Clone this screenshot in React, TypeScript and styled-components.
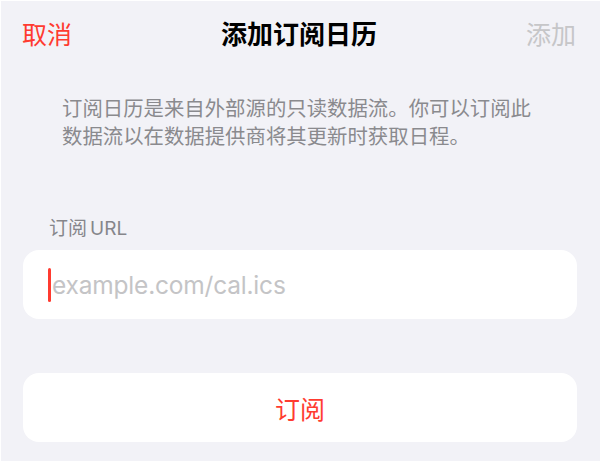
import { createGlobalStyle } from "styled-components";
import styled from "styled-components";

const GlobalStyle = createGlobalStyle`
  html, body {
    margin: 0;
    padding: 0;
    background: #f2f2f7;
  }
  * {
    box-sizing: border-box;
  }
`;

const CJK = `"Noto Sans CJK SC", "Noto Sans", sans-serif`;
const LATIN = `Inter, "Noto Sans CJK SC", sans-serif`;

const Page = styled.div`
  width: 600px;
  height: 462px;
  background: #f2f2f7;
  border-top: 1px solid #fff;
  border-left: 1px solid #fff;
  border-bottom: 1px solid #fff;
  display: flex;
  flex-direction: column;
  font-family: ${CJK};
  overflow: hidden;
  & > * {
    flex-shrink: 0;
  }
`;

const NavBar = styled.div`
  height: 63px;
  display: grid;
  grid-template-columns: 1fr auto 1fr;
  align-items: center;
  padding: 0 24px 0 21px;
`;

const NavButton = styled.span<{ $align: "left" | "right"; $disabled?: boolean }>`
  font-size: 25px;
  line-height: 30px;
  color: ${(p) => (p.$disabled ? "#c6c6c8" : "#ff3b30")};
  justify-self: ${(p) => (p.$align === "left" ? "start" : "end")};
`;

const NavTitle = styled.h1`
  margin: 0;
  font-size: 26px;
  line-height: 30px;
  font-weight: 700;
  color: #000;
`;

const Description = styled.p`
  margin: 29px 0 0;
  padding: 0 40px 0 61px;
  font-size: 20.4px;
  line-height: 28px;
  color: #8a8a8e;
`;

const Section = styled.div<{ $top: number }>`
  margin-top: ${(p) => p.$top}px;
  display: flex;
  flex-direction: column;
  gap: 9px;
  padding: 0 23px 0 22px;
`;

const FieldLabel = styled.div`
  padding-left: 26px;
  font-size: 19px;
  line-height: 24px;
  color: #86868b;
`;

const Latin = styled.span`
  font-family: ${LATIN};
  font-size: 19px;
  margin-left: 3px;
`;

const Card = styled.div`
  height: 69px;
  background: #fff;
  border-radius: 16px;
  display: flex;
  align-items: center;
`;

const InputCard = styled(Card)`
  padding-left: 25px;
`;

const Caret = styled.span`
  width: 3px;
  height: 34px;
  border-radius: 2px;
  background: #ff3b30;
  margin-right: 1px;
`;

const Placeholder = styled.span`
  font-family: ${LATIN};
  font-size: 24.5px;
  letter-spacing: -0.2px;
  color: #c4c4c6;
`;

const ActionCard = styled(Card)`
  justify-content: center;
  font-size: 25px;
  color: #ff3b30;
`;

export default function App() {
  return (
    <>
      <GlobalStyle />
      <Page>
        <NavBar>
          <NavButton $align="left">取消</NavButton>
          <NavTitle>添加订阅日历</NavTitle>
          <NavButton $align="right" $disabled>
            添加
          </NavButton>
        </NavBar>
        <Description>
          订阅日历是来自外部源的只读数据流。你可以订阅此
          <br />
          数据流以在数据提供商将其更新时获取日程。
        </Description>
        <Section $top={66}>
          <FieldLabel>
            订阅<Latin>URL</Latin>
          </FieldLabel>
          <InputCard>
            <Caret />
            <Placeholder>example.com/cal.ics</Placeholder>
          </InputCard>
        </Section>
        <Section $top={54}>
          <ActionCard>订阅</ActionCard>
        </Section>
      </Page>
    </>
  );
}
